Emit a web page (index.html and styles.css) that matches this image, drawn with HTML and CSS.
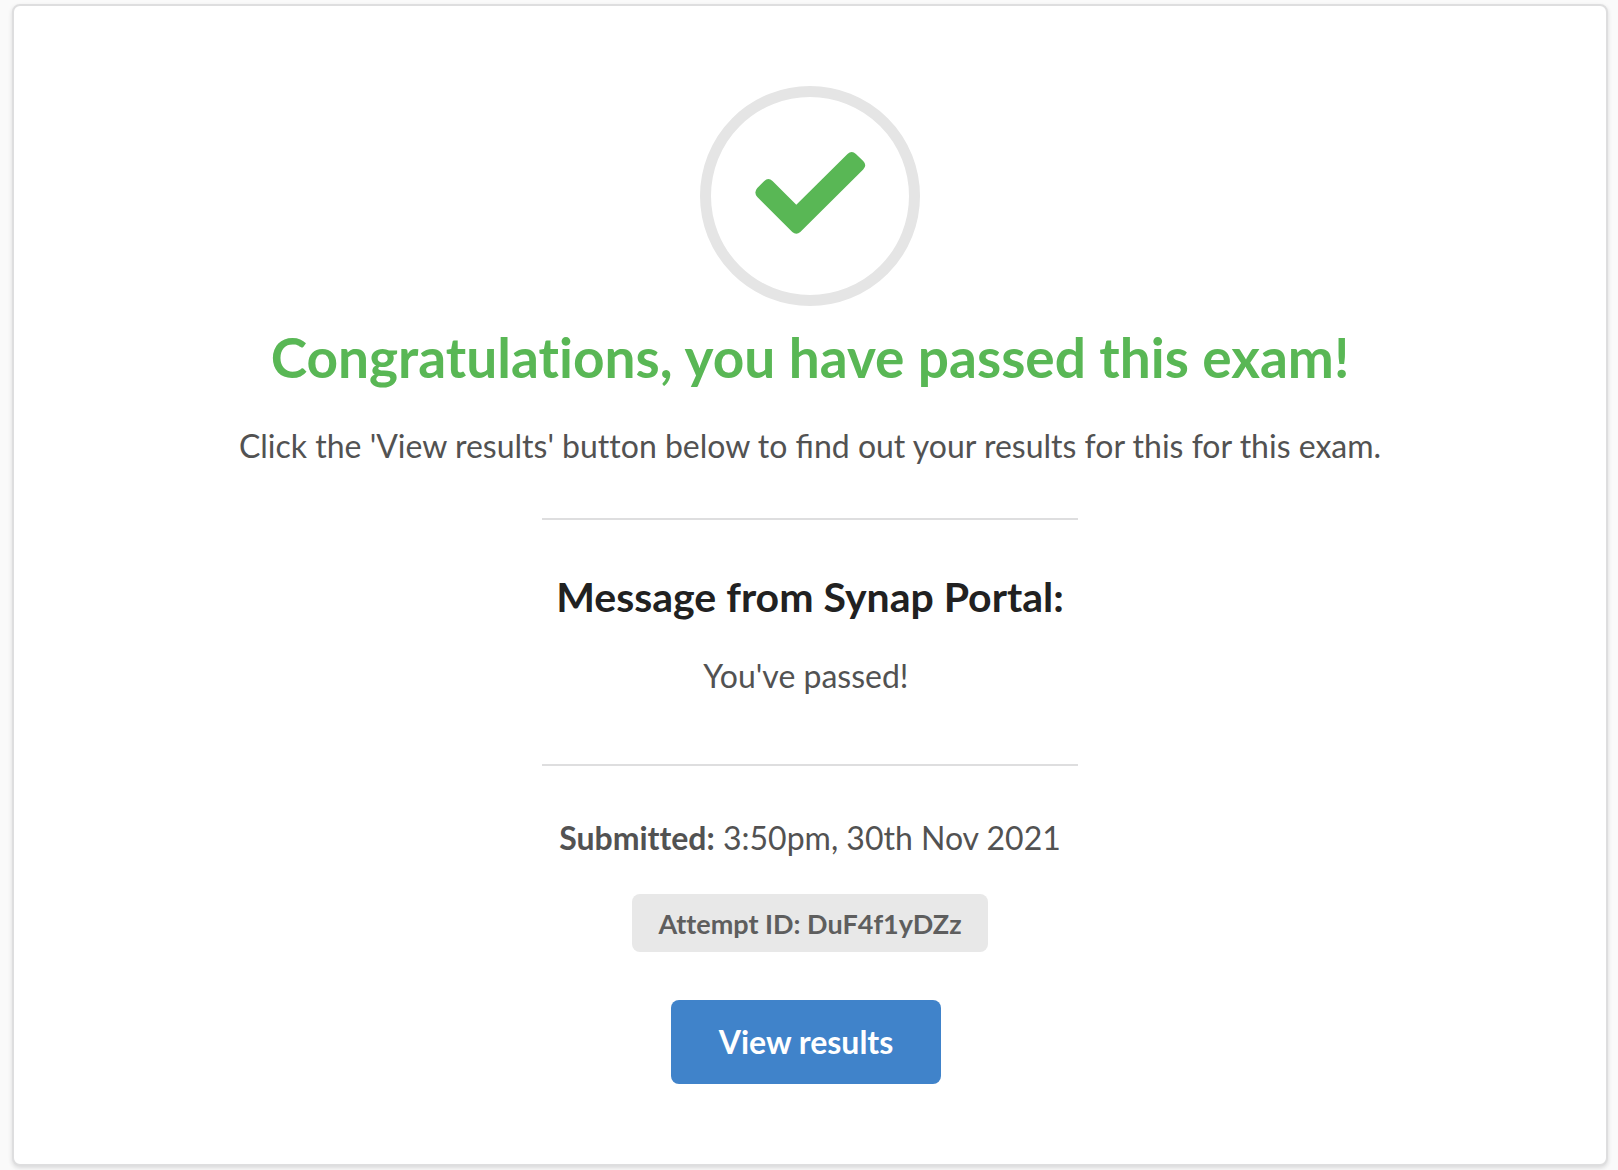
FILE: index.html
```
<!DOCTYPE html>
<html lang="en">
<head>
  <meta charset="UTF-8" />
  <meta name="viewport" content="width=device-width, initial-scale=1" />
  <title>Exam result</title>
  <link rel="stylesheet" href="styles.css">
</head>
<body>
  <main class="result-card">
    <svg class="result-icon" viewBox="0 0 220 220" aria-hidden="true">
      <circle class="icon-ring" cx="110" cy="110" r="104.5" />
      <path class="icon-tick" d="M96.3 118.7 L147.5 68 Q151.7 64.2 155.9 67.9 L163.2 75 Q167.3 79.3 163.2 83.4 L100.3 145.9 Q96.3 149.5 92.3 145.9 L57.3 111 Q53.4 106.5 57.3 101.9 L64.3 94.9 Q68.3 91.2 72.5 94.9 Z" />
    </svg>

    <h1 class="result-title no-liga">Congratulations, you have passed this exam!</h1>
    <p class="result-text">Click the 'View results' <span class="no-liga">button</span> below to find out your results for this for this exam.</p>

    <hr class="divider" />

    <section class="message">
      <h2 class="message-title">Message from Synap Portal:</h2>
      <p class="result-text">You've passed!&nbsp;</p>
    </section>

    <hr class="divider" />

    <p class="result-text no-liga"><strong>Submitted:</strong> 3:50pm, 30th Nov 2021</p>
    <div class="attempt-label no-liga">Attempt ID: DuF4f1yDZz</div>
    <button class="results-btn" type="button">View results</button>
  </main>
</body>
</html>
```
FILE: styles.css
```
* {
  box-sizing: border-box;
}

body {
  margin: 0;
  padding: 4px 10px 4px 12px;
  background-color: #fafafa;
  color: #525252;
  font-family: Lato, sans-serif;
  font-size: 32px;
  line-height: 48px;
}

.result-card {
  display: flex;
  flex-direction: column;
  align-items: center;
  padding: 80px 32px;
  background-color: #fff;
  border: 2px solid #dededf;
  border-radius: 8px;
  box-shadow: 0 2px 4px rgba(34, 36, 38, 0.15);
  text-align: center;
}

.result-icon {
  width: 220px;
  height: 220px;
}

.icon-ring {
  fill: none;
  stroke: #e5e5e5;
  stroke-width: 11;
}

.icon-tick {
  fill: #59b755;
}

/* keep tt and ti as separate letters */
.no-liga {
  font-variant-ligatures: no-common-ligatures;
}

.result-title {
  margin: 16px 0 30px;
  color: #59b755;
  font-size: 55px;
  line-height: 70px;
}

.result-text {
  margin: 0;
}

.divider {
  width: 536px;
  max-width: 100%;
  margin: 48px 0;
  border: 0;
  border-top: 2px solid #dededf;
}

.message {
  padding-bottom: 16px;
}

.message-title {
  margin: 0 0 26px;
  color: #212121;
  font-size: 41px;
  line-height: 58px;
}

.attempt-label {
  margin: 32px 0 48px;
  padding: 6px 26px 4px;
  background-color: #e8e8e8;
  border-radius: 8px;
  color: #5e5e5e;
  font-size: 27px;
  font-weight: bold;
}

.results-btn {
  margin: 0 8px 0 0;
  padding: 18px 48px;
  background-color: #4083ca;
  border: 0;
  border-radius: 8px;
  color: #fff;
  font: inherit;
  font-weight: bold;
  cursor: pointer;
}

.results-btn:hover {
  background-color: #3573b5;
}
```
